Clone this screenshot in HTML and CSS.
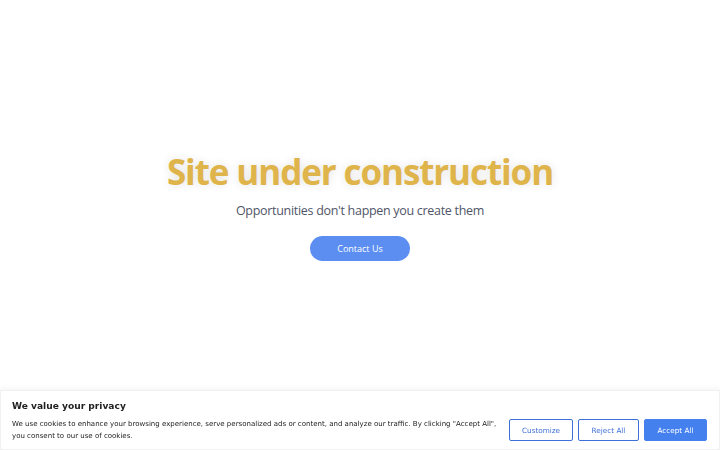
FILE: index.html
```html
<!DOCTYPE html>
<html lang="en">
<head>
<meta charset="utf-8">
<title>Site under construction</title>
<link rel="stylesheet" href="styles.css">
</head>
<body>
<main class="hero">
  <h1 class="title">Site under construction</h1>
  <p class="subtitle">Opportunities don't happen you create them</p>
  <a class="contact" href="#">Contact Us</a>
</main>
<div class="cookie">
  <div class="cookie-inner">
    <p class="cookie-title">We value your privacy</p>
    <div class="cookie-row">
      <p class="cookie-text">We use cookies to enhance your browsing experience, serve personalized ads or content, and analyze our traffic. By clicking "Accept All",<br>you consent to our use of cookies.</p>
      <div class="cookie-btns">
        <button class="btn btn-outline btn-customize">Customize</button>
        <button class="btn btn-outline btn-reject">Reject All</button>
        <button class="btn btn-solid btn-accept">Accept All</button>
      </div>
    </div>
  </div>
</div>
</body>
</html>
```
FILE: styles.css
```css
* { box-sizing: border-box; }
html, body { margin: 0; padding: 0; height: 100%; }
body {
  background: #ffffff;
  font-family: "Open Sans", "DejaVu Sans", sans-serif;
  overflow: hidden;
}
.hero {
  height: 100%;
  display: flex;
  flex-direction: column;
  align-items: center;
  padding-top: 148px;
}
.title {
  margin: 0;
  font-family: "Open Sans", sans-serif;
  font-weight: 700;
  font-size: 35px;
  line-height: 48px;
  letter-spacing: -1.1px;
  color: #dfb44a;
  text-shadow: 0 0 10px rgba(0,0,0,0.12);
}
.subtitle {
  margin: 6px 0 0;
  font-family: "Open Sans", sans-serif;
  font-weight: 400;
  font-size: 12.5px;
  line-height: 18px;
  letter-spacing: -0.3px;
  color: #4f5567;
}
.contact {
  margin-top: 16px;
  width: 100px;
  height: 25px;
  border-radius: 13px;
  background: #5b8ef0;
  color: #ffffff;
  font-family: "Open Sans", sans-serif;
  font-size: 9px;
  line-height: 25px;
  text-align: center;
  text-decoration: none;
}
.cookie {
  position: fixed;
  left: 0;
  right: 0;
  bottom: 0;
  height: 60px;
  background: #ffffff;
  border: 1px solid #f1f1f1;
  box-shadow: 0 -1px 6px rgba(0,0,0,0.06);
  font-family: "DejaVu Sans", sans-serif;
}
.cookie-inner {
  padding: 8px 12px 0 11px;
}
.cookie-title {
  margin: 0;
  font-size: 9.1px;
  font-weight: 700;
  line-height: 14px;
  color: #212121;
}
.cookie-row {
  display: flex;
  align-items: center;
  gap: 6px;
  margin-top: 5px;
}
.cookie-text {
  margin: 0;
  flex: 1;
  font-size: 7.02px;
  line-height: 12px;
  color: #212121;
}
.cookie-btns {
  display: flex;
  gap: 5px;
}
.btn {
  height: 22px;
  padding: 0;
  font-family: "DejaVu Sans", sans-serif;
  font-size: 7.25px;
  border-radius: 2px;
  border: 1.5px solid #3f6fd8;
  cursor: pointer;
}
.btn-customize { width: 64px; }
.btn-reject { width: 61px; }
.btn-accept { width: 63px; }
.btn-outline {
  background: #ffffff;
  color: #3f6fd8;
}
.btn-solid {
  background: #4481ee;
  border-color: #4481ee;
  color: #ffffff;
}
```
